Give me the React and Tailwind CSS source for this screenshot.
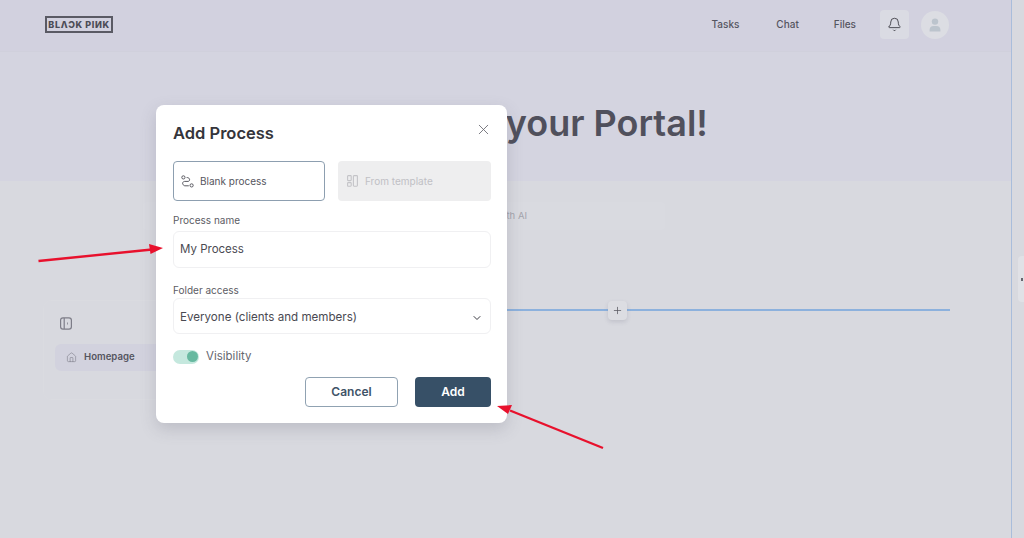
import React from "react";
import { X, ChevronDown, Bell, Plus, House } from "lucide-react";

const font = { fontFamily: "Inter, sans-serif" };

const RouteIcon = () => (
    <svg width="13" height="13" viewBox="0 0 13 13" fill="none" stroke="#5a5a62" strokeWidth="1">
        <circle cx="2.4" cy="2.4" r="1.6" />
        <circle cx="10.6" cy="10.4" r="1.6" />
        <path d="M5.6 2.6h1.2a1.5 1.5 0 0 1 1 .5l.6.9a1.6 1.6 0 0 1-1.3 2.4H3.6a2 2 0 0 0-1.4 3.4l.4.4a2 2 0 0 0 1.4.6h3.8" />
    </svg>
);

const TemplateIcon = () => (
    <svg width="11" height="12" viewBox="0 0 11 12" fill="none" stroke="#c4c4c8" strokeWidth="1.1">
        <rect x="0.6" y="0.6" width="3.6" height="5" rx="0.6" />
        <rect x="0.6" y="7.6" width="3.6" height="3.6" rx="0.6" />
        <rect x="6.4" y="0.6" width="4" height="10.6" rx="0.6" />
    </svg>
);

const PanelIcon = () => (
    <svg width="12" height="13" viewBox="0 0 12 13" fill="none" stroke="#7d7d88" strokeWidth="1.2">
        <rect x="0.6" y="0.9" width="10.8" height="11.2" rx="2.4" />
        <path d="M4.2 1v11" />
        <path d="M8 5.6 7 6.5l1 .9" strokeWidth="0.9" />
    </svg>
);

const AvatarIcon = () => (
    <svg width="12" height="14" viewBox="0 0 12 14" fill="#bcc4cd">
        <circle cx="6" cy="3.6" r="3.2" />
        <path d="M0.6 13.4v-1.6A4 4 0 0 1 4.6 7.9h2.8a4 4 0 0 1 4 3.9v1.6z" />
    </svg>
);

const Arrows = () => (
    <svg className="absolute inset-0 pointer-events-none" width="1024" height="538" viewBox="0 0 1024 538">
        <path d="M38.5 261 L152 249.5" stroke="#e8112d" strokeWidth="2.4" fill="none" />
        <path d="M163 248 L149 244 L150.5 254 Z" fill="#e8112d" />
        <path d="M603 448 L510 410.5" stroke="#e8112d" strokeWidth="2.4" fill="none" />
        <path d="M497 406 L512 405 L508 414 Z" fill="#e8112d" />
    </svg>
);

const Modal = () => (
    <div className="absolute left-[156px] top-[105px] w-[351px] h-[318px] bg-white rounded-lg pl-[17px] pr-[16px] pt-[16px] shadow-[0_6px_16px_rgba(90,90,110,0.22)]">
        <div className="flex items-center justify-between h-[24px]">
            <h2 className="text-[16.5px] leading-6 font-semibold text-[#35353b]">Add Process</h2>
            <X size={17} strokeWidth={1.2} className="text-[#66666e] mr-[-1px] mt-[-8px]" />
        </div>
        <div className="flex gap-[13px] mt-[16px]">
            <div className="w-[152px] h-[40px] flex items-center gap-[6px] pl-[7px] rounded border border-[#8d9fb0] text-[10px] text-[#55555d]">
                <RouteIcon />
                <span className="mt-[1px]">Blank process</span>
            </div>
            <div className="flex-1 h-[40px] flex items-center gap-[7px] pl-[9px] rounded bg-[#eeeeef] text-[10px] text-[#c0c0c5]">
                <TemplateIcon />
                <span className="mt-[1px]">From template</span>
            </div>
        </div>
        <label className="block mt-[13px] text-[10px] leading-[13px] text-[#5c5c64]">Process name</label>
        <div className="mt-[4px] h-[37px] flex items-center px-[6px] pt-[1px] rounded-md border border-[#f0f0f2] text-[11.5px] text-[#4a4a52]">
            My Process
        </div>
        <label className="block mt-[16px] text-[10px] leading-[13px] text-[#5c5c64]">Folder access</label>
        <div className="mt-[1px] h-[36px] flex items-center justify-between pl-[6px] pr-[7px] pt-[3px] rounded-md border border-[#f0f0f2] text-[11.6px] text-[#4a4a52]">
            Everyone (clients and members)
            <ChevronDown size={12} strokeWidth={2} className="text-[#3a3a42]" />
        </div>
        <div className="flex items-center gap-[7px] mt-[14px]">
            <div className="w-[26px] h-[14px] rounded-full bg-[#c5e8de] flex items-center justify-end pr-[1px]">
                <div className="w-[11px] h-[11px] rounded-full bg-[#67b9a0]" />
            </div>
            <span className="text-[11.5px] text-[#66666e]">Visibility</span>
        </div>
        <div className="flex justify-end gap-[17px] mt-[12px]">
            <button className="w-[93px] h-[30px] rounded border border-[#90a2b2] text-[12px] font-semibold text-[#3f5468]">Cancel</button>
            <button className="w-[76px] h-[30px] rounded bg-[#375067] text-[12px] font-semibold text-white">Add</button>
        </div>
    </div>
);

const App = () => {
    return (
        <div className="relative w-[1024px] h-[538px] overflow-hidden flex bg-[#d8d9df]" style={font}>
            <main className="w-[1012px] h-full flex flex-col border-r border-[#a9bddb]">
                <div className="h-[181px] bg-[#d4d4e0] flex flex-col">
                    <header className="h-[52px] shrink-0 flex items-center border-b border-[#d0d0dc] bg-[#d2d1df] pl-[45px] pr-[62px] pb-[2px]">
                        <div className="w-[68px] h-[17px] border-2 border-[#5a5a64] flex items-center justify-center text-[9px] font-extrabold tracking-[0.6px] text-[#4c4c56] whitespace-nowrap">
                            BLΛƆK PIИK
                        </div>
                        <nav className="ml-auto flex items-center text-[10px] font-medium text-[#55555f]">
                            <span>Tasks</span>
                            <span className="ml-[37px]">Chat</span>
                            <span className="ml-[35px]">Files</span>
                        </nav>
                        <div className="ml-[24px] w-[29px] h-[29px] rounded bg-[#dadbe3] flex items-center justify-center">
                            <Bell size={15} strokeWidth={1.4} className="text-[#3a3a42]" />
                        </div>
                        <div className="ml-[12px] w-[28px] h-[28px] rounded-full bg-[#dcdde3] flex items-center justify-center">
                            <AvatarIcon />
                        </div>
                    </header>
                    <h1 className="mt-[49px] pr-[12px] text-center text-[36px] leading-[44px] font-semibold text-[#50505c]">
                        Welcome to your Portal!
                    </h1>
                </div>
                <div className="flex flex-col flex-1 pl-[43px] pr-[61px]">
                    <div className="ml-[100px] mr-[285px] mt-[21px] h-[28px] rounded bg-[#d9dae0] flex items-center justify-end pr-[138px] text-[9.5px] text-[#a4a4ac]">
                        Build your process with AI
                    </div>
                    <div className="flex mt-[70px]">
                        <aside className="w-[227px] h-[100px] rounded-lg border border-[#dadbe0] px-[11px] pt-[16px]">
                            <div className="ml-[5px]"><PanelIcon /></div>
                            <div className="mt-[14px] h-[27px] rounded-md bg-[#d2d2de] flex items-center gap-[7px] pl-[11px] text-[9.6px] font-semibold text-[#55555f]">
                                <House size={11} strokeWidth={1.2} className="text-[#777782]" />
                                Homepage
                            </div>
                        </aside>
                        <div className="relative flex-1 h-[20px] ml-[14px] flex items-center justify-center">
                            <div className="absolute inset-x-0 top-[9px] h-[1.5px] bg-[#8cb1dd]" />
                            <div className="relative w-[19px] h-[19px] rounded bg-[#dcdde2] shadow-[0_2px_4px_rgba(90,90,110,0.18)] flex items-center justify-center">
                                <Plus size={11} strokeWidth={1.6} className="text-[#55555d]" />
                            </div>
                        </div>
                    </div>
                </div>
            </main>
            <div className="absolute right-0 top-[256px] w-[6px] h-[46px] rounded-l bg-[#e0e1e6] flex items-center">
                <div className="w-[2px] h-[3px] bg-[#66666e] ml-[3px]" />
            </div>
            <Modal />
            <Arrows />
        </div>
    );
};

export default App;
